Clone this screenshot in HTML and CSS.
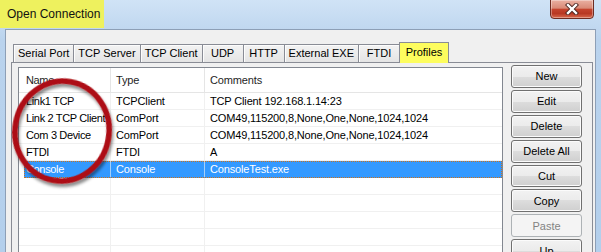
FILE: index.html
```html
<!DOCTYPE html>
<html lang="en">
<head>
    <meta charset="UTF-8">
    <meta name="viewport" content="width=device-width, initial-scale=1.0">
    <title>Open Connection</title>
    <link rel="stylesheet" href="styles.css">
</head>
<body>
    <div class="window">
        <div class="titlebar">
            <div class="title">Open Connection</div>
            <div class="close-btn">
                <svg width="14" height="12" viewBox="0 0 14 12">
                    <path d="M3 2 L11 10 M11 2 L3 10" stroke="#4b2520" stroke-width="4.2" stroke-linecap="square"/>
                    <path d="M3 2 L11 10 M11 2 L3 10" stroke="#fff" stroke-width="2.4" stroke-linecap="square"/>
                </svg>
            </div>
        </div>

        <div class="client">
            <div class="tabstrip">
                <div class="tab">Serial Port</div>
                <div class="tab">TCP Server</div>
                <div class="tab">TCP Client</div>
                <div class="tab">UDP</div>
                <div class="tab">HTTP</div>
                <div class="tab">External EXE</div>
                <div class="tab">FTDI</div>
                <div class="tab active">Profiles</div>
            </div>

            <div class="panel">
                <div class="listview">
                    <div class="lv-header">
                        <div class="cell c-name">Name</div>
                        <div class="cell c-type">Type</div>
                        <div class="cell c-comment">Comments</div>
                    </div>
                    <div class="lv-row">
                        <div class="cell c-name">Link1 TCP</div>
                        <div class="cell c-type">TCPClient</div>
                        <div class="cell c-comment">TCP Client 192.168.1.14:23</div>
                    </div>
                    <div class="lv-row">
                        <div class="cell c-name">Link 2 TCP Client</div>
                        <div class="cell c-type">ComPort</div>
                        <div class="cell c-comment">COM49,115200,8,None,One,None,1024,1024</div>
                    </div>
                    <div class="lv-row">
                        <div class="cell c-name">Com 3 Device</div>
                        <div class="cell c-type">ComPort</div>
                        <div class="cell c-comment">COM49,115200,8,None,One,None,1024,1024</div>
                    </div>
                    <div class="lv-row">
                        <div class="cell c-name">FTDI</div>
                        <div class="cell c-type">FTDI</div>
                        <div class="cell c-comment">A</div>
                    </div>
                    <div class="lv-row selected">
                        <div class="cell c-name">Console</div>
                        <div class="cell c-type">Console</div>
                        <div class="cell c-comment">ConsoleTest.exe</div>
                    </div>
                    <div class="lv-row"><div class="cell c-name"></div><div class="cell c-type"></div><div class="cell c-comment"></div></div>
                    <div class="lv-row"><div class="cell c-name"></div><div class="cell c-type"></div><div class="cell c-comment"></div></div>
                    <div class="lv-row"><div class="cell c-name"></div><div class="cell c-type"></div><div class="cell c-comment"></div></div>
                    <div class="lv-row"><div class="cell c-name"></div><div class="cell c-type"></div><div class="cell c-comment"></div></div>
                    <div class="lv-row"><div class="cell c-name"></div><div class="cell c-type"></div><div class="cell c-comment"></div></div>
                </div>

                <div class="buttons">
                    <button class="btn">New</button>
                    <button class="btn">Edit</button>
                    <button class="btn">Delete</button>
                    <button class="btn">Delete All</button>
                    <button class="btn">Cut</button>
                    <button class="btn">Copy</button>
                    <button class="btn" disabled>Paste</button>
                    <button class="btn">Up</button>
                </div>
            </div>
        </div>

        <!-- hand drawn highlight round the name column -->
        <svg class="marker" width="124" height="126" viewBox="0 0 124 126">
            <defs>
                <filter id="shadow" x="-20%" y="-20%" width="140%" height="140%">
                    <feDropShadow dx="2" dy="3" stdDeviation="1.6" flood-color="#000" flood-opacity="0.45"/>
                </filter>
            </defs>
            <ellipse cx="57" cy="59" rx="47" ry="50" transform="rotate(10 57 59)"
                     fill="none" stroke="#ad0f16" stroke-width="5.5" filter="url(#shadow)"/>
        </svg>
    </div>
</body>
</html>
```

FILE: styles.css
```css
* {
    box-sizing: border-box;
}
body {
    margin: 0;
    font-family: "Liberation Sans", Arial, sans-serif;
    font-size: 11px;
    color: #000;
    background: #b9d2ec;
}
.window {
    position: relative;
    width: 601px;
    height: 252px;
    overflow: hidden;
    background: linear-gradient(#d0e3f6, #bad3ed 40px, #b3cfec);
}

/* title bar */
.titlebar {
    display: flex;
    justify-content: space-between;
    height: 29px;
}
.title {
    width: 104px;
    height: 28px;
    padding-left: 7px;
    line-height: 28px;
    font-size: 12px;
    color: #111;
    background: #eef15e;
}
.close-btn {
    display: flex;
    align-items: center;
    justify-content: center;
    width: 44px;
    height: 20px;
    margin: -1px 7px 0 0;
    border: 1px solid #6e2c22;
    border-radius: 0 0 4px 4px;
    background: linear-gradient(#eab0a2 0%, #d98a77 45%, #c4432d 52%, #b83823 75%, #d8694d 100%);
    box-shadow: inset 0 0 0 1px rgba(255,255,255,0.35);
}

/* dialog body */
.client {
    height: 223px;
    margin: 0 5px;
    padding: 12px 2px 0 5px;
    border: 1px solid #8d9fb6;
    border-bottom: 0;
    background: #f0f0f0;
}
.tabstrip {
    display: flex;
    align-items: flex-end;
    height: 20px;
    margin-left: 2px;
}
.tab {
    height: 18px;
    min-width: 42px;
    padding: 0 4px;
    margin-right: -1px;
    border: 1px solid #898c95;
    border-bottom: 0;
    background: linear-gradient(#f3f3f3, #e4e4e4);
    box-shadow: inset 1px 1px #fcfcfc;
    text-align: center;
    line-height: 17px;
    white-space: nowrap;
}
.tab.active {
    position: relative;
    z-index: 1;
    height: 21px;
    min-width: 50px;
    margin-bottom: -1px;
    background: #fdfd5e;
    box-shadow: none;
    line-height: 19px;
}
.panel {
    display: flex;
    gap: 8px;
    height: 200px;
    padding: 2px 10px 0 6px;
    border: 1px solid #898c95;
    border-bottom: 0;
    background: #f0f0f0;
}

/* list view */
.listview {
    flex: 1;
    margin-top: 2px;
    border: 1px solid #828790;
    border-bottom: 0;
    background: #fff;
    overflow: hidden;
    letter-spacing: -0.15px;
}
.lv-header {
    display: flex;
    height: 25px;
    line-height: 24px;
    border-bottom: 1px solid #e5e5e5;
    color: #1e1e1e;
}
.lv-header .cell {
    border-right-color: #e5e5e5;
}
.lv-row {
    display: flex;
    height: 17px;
    line-height: 17px;
    border-bottom: 1px solid #f0f0f0;
}
.cell {
    padding-left: 5px;
    border-right: 1px solid #f0f0f0;
    white-space: nowrap;
    overflow: hidden;
}
.c-name {
    width: 92px;
    padding-left: 7px;
    letter-spacing: -0.35px;
}
.c-type {
    width: 94px;
}
.c-comment {
    flex: 1;
    border-right: 0;
}
.lv-row.selected {
    margin-left: 5px;
    background: #3399ff;
    color: #fff;
    border-bottom-color: #3399ff;
    outline: 1px dotted #c8711f;
    outline-offset: -1px;
}
.lv-row.selected .c-name {
    width: 87px;
    padding-left: 2px;
}
.lv-row.selected .cell {
    border-right-color: #a6cff8;
}

/* command buttons */
.buttons {
    display: flex;
    flex-direction: column;
    gap: 2px;
    width: 71px;
}
.btn {
    height: 23px;
    padding: 0;
    font-family: inherit;
    font-size: 11px;
    color: #000;
    border: 1px solid #707070;
    border-radius: 3px;
    background: linear-gradient(#f2f2f2 0%, #ebebeb 50%, #dddddd 50%, #cfcfcf 100%);
    box-shadow: inset 0 0 0 1px #fbfbfb;
}
.btn:disabled {
    color: #838383;
    border-color: #adb2b5;
    background: #f4f4f4;
    box-shadow: none;
}

.marker {
    position: absolute;
    left: 5px;
    top: 72px;
}
```
